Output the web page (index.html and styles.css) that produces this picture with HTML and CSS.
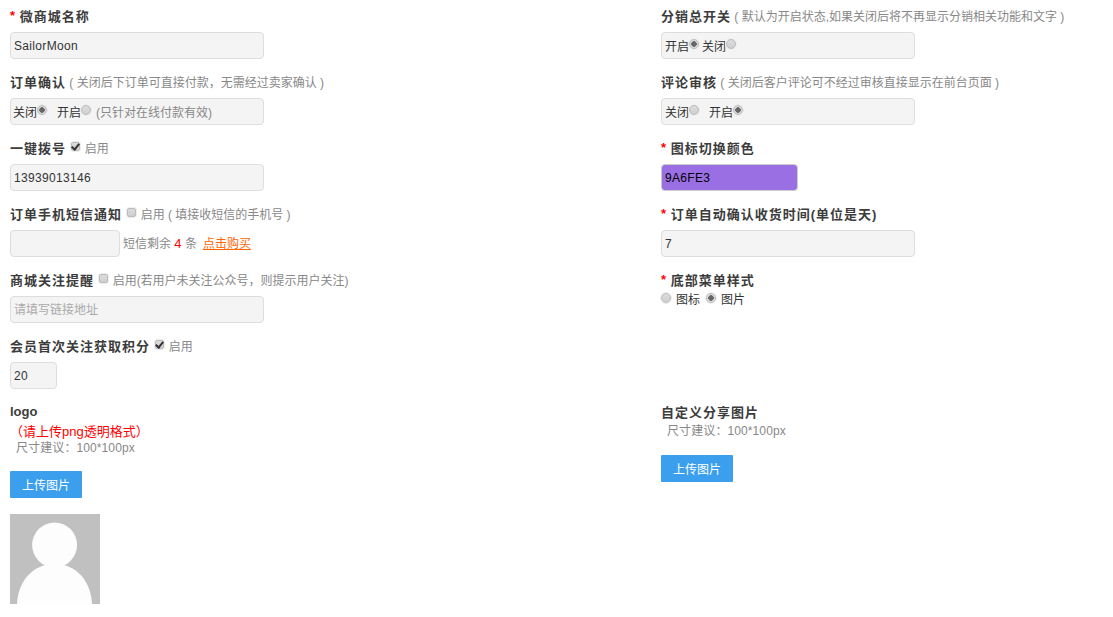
FILE: index.html
```html
<!DOCTYPE html>
<html lang="zh-CN">
<head>
<meta charset="utf-8">
<title>微商城设置</title>
<link rel="stylesheet" href="styles.css">
</head>
<body>
<form class="settings">
  <div class="field">
    <div class="title"><span class="req">*</span> 微商城名称</div>
    <input class="text" type="text" value="SailorMoon">
  </div>
  <div class="field">
    <div class="title">分销总开关<span class="hint"> ( 默认为开启状态,如果关闭后将不再显示分销相关功能和文字 )</span></div>
    <div class="box"><span>开启</span><input class="radio" type="radio" name="a" checked><span class="gap1">关闭</span><input class="radio" type="radio" name="a"></div>
  </div>

  <div class="field">
    <div class="title">订单确认<span class="hint"> ( 关闭后下订单可直接付款，无需经过卖家确认 )</span></div>
    <div class="box"><span>关闭</span><input class="radio" type="radio" name="b" checked><span class="gap2">开启</span><input class="radio" type="radio" name="b"><span class="hint note">(只针对在线付款有效)</span></div>
  </div>
  <div class="field">
    <div class="title">评论审核<span class="hint"> ( 关闭后客户评论可不经过审核直接显示在前台页面 )</span></div>
    <div class="box"><span>关闭</span><input class="radio" type="radio" name="c"><span class="gap2">开启</span><input class="radio" type="radio" name="c" checked></div>
  </div>

  <div class="field">
    <div class="title">一键拨号 <input class="check" type="checkbox" checked><span class="hint">启用</span></div>
    <input class="text" type="text" value="13939013146">
  </div>
  <div class="field">
    <div class="title"><span class="req">*</span> 图标切换颜色</div>
    <input class="text color" type="text" value="9A6FE3">
  </div>

  <div class="field">
    <div class="title">订单手机短信通知 <input class="check" type="checkbox"><span class="hint">启用 ( 填接收短信的手机号 )</span></div>
    <div class="inline">
      <input class="text mid" type="text">
      <span class="hint">短信剩余 <b class="count">4</b> 条</span>
      <a class="buy" href="#">点击购买</a>
    </div>
  </div>
  <div class="field">
    <div class="title"><span class="req">*</span> 订单自动确认收货时间(单位是天)</div>
    <input class="text" type="text" value="7">
  </div>

  <div class="field">
    <div class="title">商城关注提醒 <input class="check" type="checkbox"><span class="hint">启用(若用户未关注公众号，则提示用户关注)</span></div>
    <input class="text" type="text" placeholder="请填写链接地址">
  </div>
  <div class="field">
    <div class="title"><span class="req">*</span> 底部菜单样式</div>
    <div class="plain"><input class="radio" type="radio" name="d"><span class="opt">图标</span><input class="radio" type="radio" name="d" checked><span class="opt">图片</span></div>
  </div>

  <div class="field">
    <div class="title">会员首次关注获取积分 <input class="check" type="checkbox" checked><span class="hint">启用</span></div>
    <input class="text small" type="text" value="20">
  </div>
  <div class="field"></div>

  <div class="upload">
    <div class="title latin">logo</div>
    <div class="line warn">（请上传png透明格式）</div>
    <div class="line hint size">尺寸建议：100*100px</div>
    <button class="btn" type="button">上传图片</button>
    <svg class="avatar" width="90" height="90" viewBox="0 0 90 90" role="img" aria-label="默认头像">
      <rect width="90" height="90" fill="#c0c0c0"/>
      <circle cx="44.6" cy="31" r="22.5" fill="#fdfdfd"/>
      <path d="M7 90C8 68 22 50 44.6 50S81 68 82 90Z" fill="#fdfdfd"/>
    </svg>
  </div>
  <div class="upload share">
    <div class="title">自定义分享图片</div>
    <div class="line hint size">尺寸建议：100*100px</div>
    <button class="btn" type="button">上传图片</button>
  </div>
</form>
</body>
</html>
```

FILE: styles.css
```css
* { box-sizing: border-box; }
html, body { margin: 0; padding: 0; background: #fff; }
body {
  font-family: "Liberation Sans", "Noto Sans CJK SC", sans-serif;
  font-size: 12px;
  color: #333;
  text-spacing-trim: space-all;
}
.settings {
  display: grid;
  grid-template-columns: 651px 1fr;
  padding: 8px 0 0 10px;
}
.field { height: 66px; }
.title {
  display: flex;
  align-items: center;
  height: 14px;
  margin-bottom: 10px;
  font-size: 13px;
  font-weight: 700;
  letter-spacing: 1px;
  color: #3c3c3c;
  white-space: pre;
}
.latin { letter-spacing: 0; }
.hint {
  font-size: 12px;
  font-weight: 400;
  letter-spacing: 0;
  color: #888;
}
.req { color: #f00; letter-spacing: 0; }
.text, .box {
  display: block;
  width: 254px;
  height: 27px;
  border: 1px solid #ddd;
  border-radius: 4px;
  background: #f4f4f4;
  font: 12px "Liberation Sans", "Noto Sans CJK SC", sans-serif;
  letter-spacing: .33px;
  color: #333;
  outline: none;
}
.text { padding: 0 3px; }
.text::placeholder { color: #aaa; letter-spacing: 0; }
.small { width: 47px; }
.mid { width: 110px; flex: none; }
.color { width: 137px; background: #9a6fe3; color: #000; border-color: #ccc; }
.box {
  display: flex;
  align-items: center;
  padding: 0 3px 0 2px;
  letter-spacing: 0;
}
.field:nth-child(even) .box { padding-left: 3px; }
.radio, .check {
  appearance: none;
  flex: none;
  margin: 0;
  background: linear-gradient(#dcdcdc, #cfcfcf);
  border: 1px solid #bbb;
  box-shadow: 0 0 0 1px #eee;
}
.radio {
  width: 10px;
  height: 10px;
  border-radius: 50%;
  position: relative;
  top: -2px;
}
.radio:checked { background: radial-gradient(circle, #666 0 2.5px, #ddd 3px); }
.check {
  width: 9px;
  height: 9px;
  margin: 0 5px 0 0;
  border-radius: 2px;
  position: relative;
  top: -1px;
}
.check:checked::after {
  content: "";
  position: absolute;
  left: 1px;
  top: -1px;
  width: 3px;
  height: 6px;
  border: solid #333;
  border-width: 0 2px 2px 0;
  transform: rotate(40deg);
}
.gap1 { margin-left: 3px; }
.gap2 { margin-left: 10px; }
.note { margin-left: 5px; }
.inline {
  display: flex;
  align-items: center;
  gap: 3px;
}
.inline span, .buy { margin-bottom: 2px; }
.count { color: #f00; font-weight: 400; font-size: 13px; }
.buy { color: #f60; margin-left: 3px; }
.plain {
  display: flex;
  align-items: center;
  margin-top: -6px;
  height: 16px;
}
.plain .radio { top: 0; }
.opt { margin: 0 6px 0 5px; }
.upload { height: 214px; }
.upload .title { margin-bottom: 0; }
.line { height: 17px; line-height: 17px; letter-spacing: .1px; }
.title + .line { margin-top: 5px; }
.warn { color: #f00; font-size: 13px; letter-spacing: 0; }
.size { padding-left: 6px; }
.btn {
  display: block;
  width: 72px;
  height: 27px;
  margin-top: 14px;
  border: 0;
  border-radius: 1px;
  background: #3b9fee;
  color: #fff;
  font: 12px "Liberation Sans", "Noto Sans CJK SC", sans-serif;
}
.share .btn { margin-top: 15px; }
.avatar { display: block; margin-top: 16px; }
```
